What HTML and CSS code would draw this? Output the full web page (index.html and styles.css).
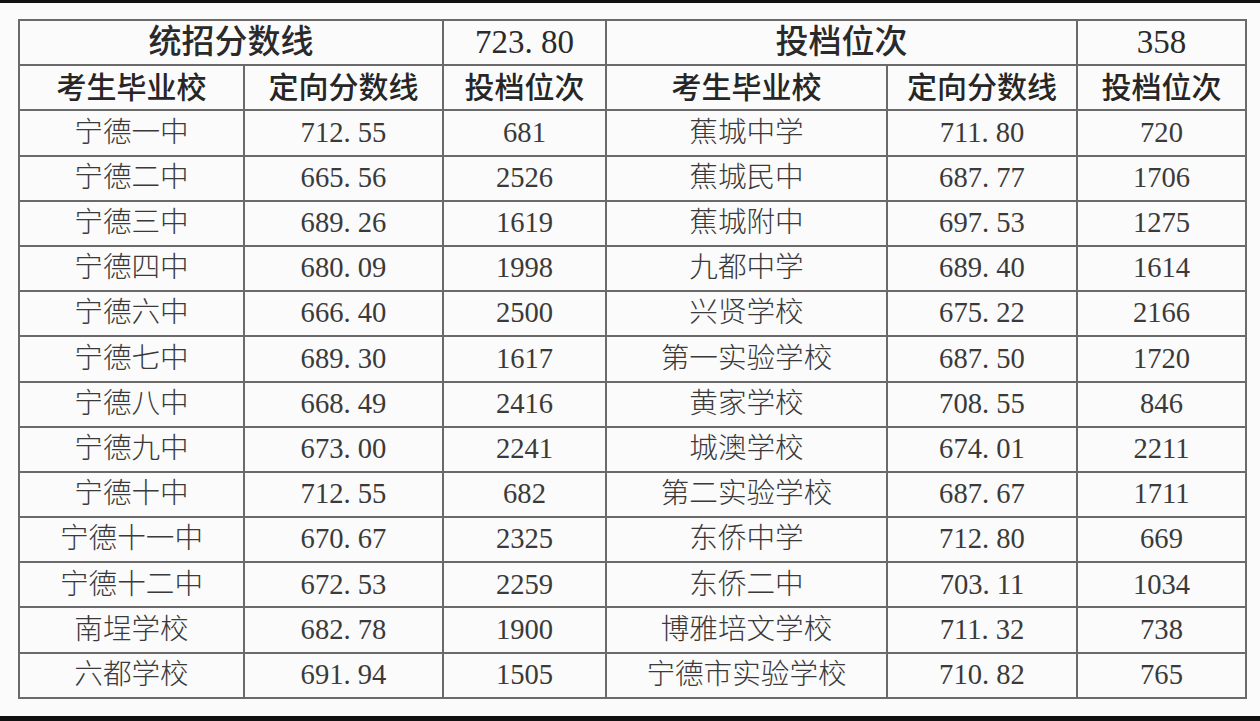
FILE: index.html
```html
<!DOCTYPE html>
<html lang="zh-CN">
<head>
<meta charset="utf-8">
<title>统招分数线</title>
<link rel="stylesheet" href="styles.css">
</head>
<body>
<div class="page">
<table class="scores">
<colgroup>
<col class="c1"><col class="c2"><col class="c3"><col class="c4"><col class="c5"><col class="c6">
</colgroup>
<thead>
<tr class="title">
<th colspan="2">统招分数线</th>
<th class="num">723<span class="dot">.</span>80</th>
<th colspan="2">投档位次</th>
<th class="num">358</th>
</tr>
<tr class="head">
<th>考生毕业校</th><th>定向分数线</th><th>投档位次</th>
<th>考生毕业校</th><th>定向分数线</th><th>投档位次</th>
</tr>
</thead>
<tbody>
<tr><td>宁德一中</td><td>712<span class="dot">.</span>55</td><td>681</td><td>蕉城中学</td><td>711<span class="dot">.</span>80</td><td>720</td></tr>
<tr><td>宁德二中</td><td>665<span class="dot">.</span>56</td><td>2526</td><td>蕉城民中</td><td>687<span class="dot">.</span>77</td><td>1706</td></tr>
<tr><td>宁德三中</td><td>689<span class="dot">.</span>26</td><td>1619</td><td>蕉城附中</td><td>697<span class="dot">.</span>53</td><td>1275</td></tr>
<tr><td>宁德四中</td><td>680<span class="dot">.</span>09</td><td>1998</td><td>九都中学</td><td>689<span class="dot">.</span>40</td><td>1614</td></tr>
<tr><td>宁德六中</td><td>666<span class="dot">.</span>40</td><td>2500</td><td>兴贤学校</td><td>675<span class="dot">.</span>22</td><td>2166</td></tr>
<tr><td>宁德七中</td><td>689<span class="dot">.</span>30</td><td>1617</td><td>第一实验学校</td><td>687<span class="dot">.</span>50</td><td>1720</td></tr>
<tr><td>宁德八中</td><td>668<span class="dot">.</span>49</td><td>2416</td><td>黄家学校</td><td>708<span class="dot">.</span>55</td><td>846</td></tr>
<tr><td>宁德九中</td><td>673<span class="dot">.</span>00</td><td>2241</td><td>城澳学校</td><td>674<span class="dot">.</span>01</td><td>2211</td></tr>
<tr><td>宁德十中</td><td>712<span class="dot">.</span>55</td><td>682</td><td>第二实验学校</td><td>687<span class="dot">.</span>67</td><td>1711</td></tr>
<tr><td>宁德十一中</td><td>670<span class="dot">.</span>67</td><td>2325</td><td>东侨中学</td><td>712<span class="dot">.</span>80</td><td>669</td></tr>
<tr><td>宁德十二中</td><td>672<span class="dot">.</span>53</td><td>2259</td><td>东侨二中</td><td>703<span class="dot">.</span>11</td><td>1034</td></tr>
<tr><td>南埕学校</td><td>682<span class="dot">.</span>78</td><td>1900</td><td>博雅培文学校</td><td>711<span class="dot">.</span>32</td><td>738</td></tr>
<tr><td>六都学校</td><td>691<span class="dot">.</span>94</td><td>1505</td><td>宁德市实验学校</td><td>710<span class="dot">.</span>82</td><td>765</td></tr>
</tbody>
</table>
</div>
</body>
</html>
```

FILE: styles.css
```css
html, body {
  margin: 0;
  padding: 0;
  background: #111111;
  overflow: hidden;
}

.page {
  margin-top: 3px;
  height: 713px;
  background: #fbfbfb;
  padding: 16px 0 0 18px;
  box-sizing: border-box;
}

.scores {
  border-collapse: collapse;
  table-layout: fixed;
  width: 1227px;
  font-family: "Liberation Serif", "Noto Sans CJK SC", serif;
  color: #3a3a3a;
}

.c1 { width: 225px; }
.c2 { width: 199px; }
.c3 { width: 163px; }
.c4 { width: 281px; }
.c5 { width: 190px; }
.c6 { width: 169px; }

.scores th,
.scores td {
  border: 2px solid #6a6a6a;
  height: 43.2px;
  padding: 0;
  text-align: center;
  vertical-align: middle;
  line-height: 1;
  white-space: nowrap;
}

.scores td {
  font-size: 28.6px;
  font-weight: 300;
}

.title th {
  font-size: 33px;
  font-weight: 500;
  color: #2a2a2a;
}

.head th {
  font-size: 30px;
  font-weight: 500;
  color: #262626;
}

.title .num {
  font-weight: 400;
}

.dot {
  display: inline-block;
  width: 0.5em;
  text-align: left;
}
```
